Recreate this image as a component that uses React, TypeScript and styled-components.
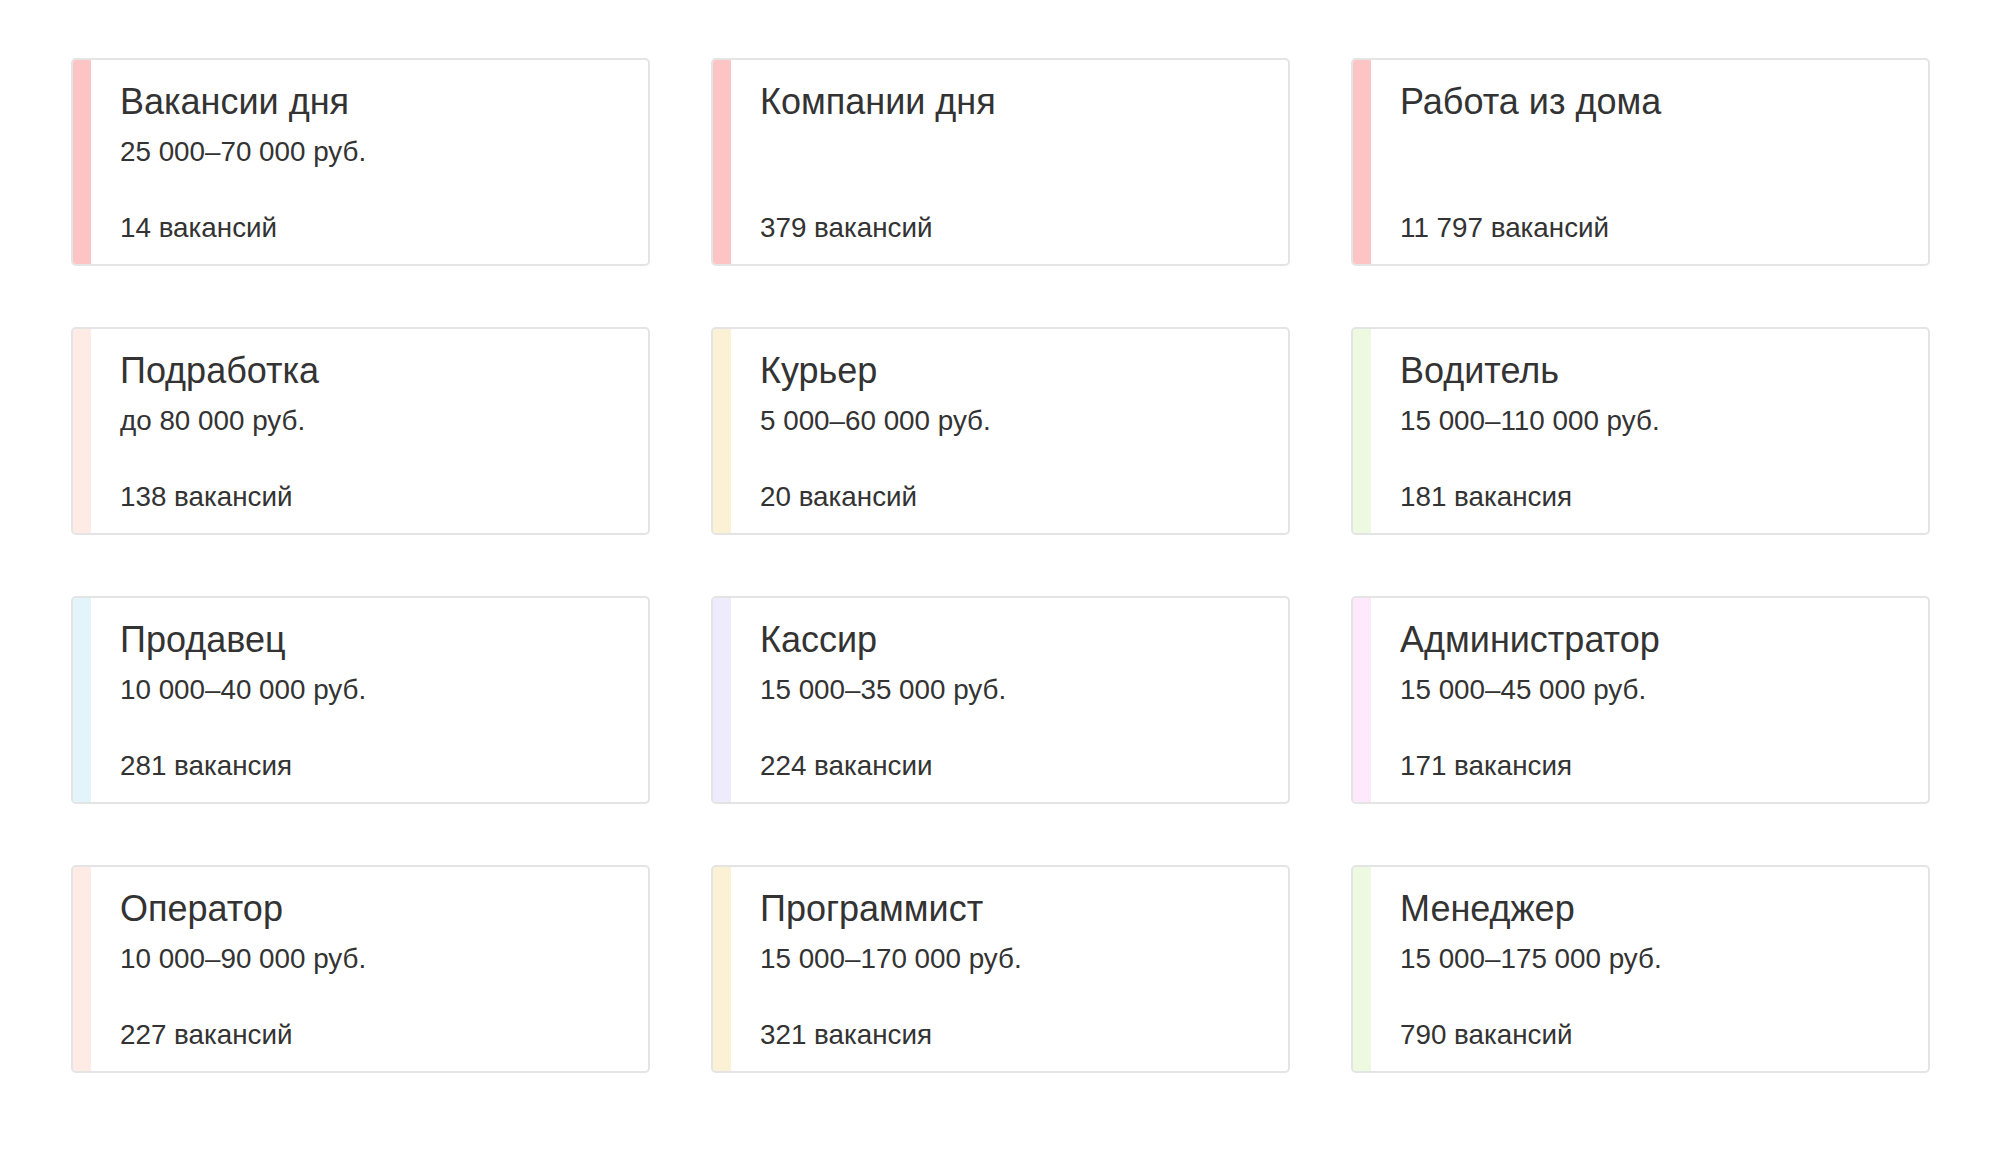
import React from 'react';
import styled, { createGlobalStyle } from 'styled-components';

interface ICategory {
  title: string;
  salary?: string;
  count: string;
  accent: string;
}

const categories: ICategory[] = [
  { title: 'Вакансии дня', salary: '25 000–70 000 руб.', count: '14 вакансий', accent: '#fcc4c4' },
  { title: 'Компании дня', count: '379 вакансий', accent: '#fcc4c4' },
  { title: 'Работа из дома', count: '11 797 вакансий', accent: '#fcc4c4' },
  { title: 'Подработка', salary: 'до 80 000 руб.', count: '138 вакансий', accent: '#ffebe5' },
  { title: 'Курьер', salary: '5 000–60 000 руб.', count: '20 вакансий', accent: '#fbf2d5' },
  { title: 'Водитель', salary: '15 000–110 000 руб.', count: '181 вакансия', accent: '#edf9e1' },
  { title: 'Продавец', salary: '10 000–40 000 руб.', count: '281 вакансия', accent: '#e3f5fb' },
  { title: 'Кассир', salary: '15 000–35 000 руб.', count: '224 вакансии', accent: '#eeebfc' },
  { title: 'Администратор', salary: '15 000–45 000 руб.', count: '171 вакансия', accent: '#fde9fb' },
  { title: 'Оператор', salary: '10 000–90 000 руб.', count: '227 вакансий', accent: '#ffebe5' },
  { title: 'Программист', salary: '15 000–170 000 руб.', count: '321 вакансия', accent: '#fbf2d5' },
  { title: 'Менеджер', salary: '15 000–175 000 руб.', count: '790 вакансий', accent: '#edf9e1' },
];

function CategoryCard({ title, salary, count, accent }: ICategory) {
  return (
    <Card>
      <Stripe color={accent} />
      <CardBody>
        <Title>{title}</Title>
        {salary && <Salary>{salary}</Salary>}
        <Count>{count}</Count>
      </CardBody>
    </Card>
  );
}

function App() {
  return (
    <>
      <GlobalStyle />
      <Page>
        <Grid>
          {categories.map((item) => (
            <CategoryCard key={item.title} {...item} />
          ))}
        </Grid>
      </Page>
    </>
  );
}

export default App;

const GlobalStyle = createGlobalStyle`
  html, body {
    margin: 0;
    background: #fff;
  }
  body {
    font-family: 'Liberation Sans', Arial, sans-serif;
    color: #333;
  }
`;

const Page = styled.main`
  padding: 58px 0 0 71px;
`;

const Grid = styled.div`
  display: grid;
  grid-template-columns: repeat(3, 579px);
  column-gap: 61px;
  row-gap: 61px;
`;

const Card = styled.a`
  display: flex;
  box-sizing: border-box;
  height: 208px;
  border: 2px solid #e4e4e4;
  border-radius: 5px;
  overflow: hidden;
  background: #fff;
  color: inherit;
  text-decoration: none;
`;

const Stripe = styled.div<{ color: string }>`
  flex: 0 0 18px;
  background: ${(props) => props.color};
`;

const CardBody = styled.div`
  display: flex;
  flex-direction: column;
  flex: 1;
  padding: 22px 24px 20px 29px;
`;

const Title = styled.h3`
  margin: 0;
  font-size: 36px;
  line-height: 40px;
  font-weight: normal;
  color: #333;
`;

const Salary = styled.div`
  margin-top: 14px;
  font-size: 27.8px;
  line-height: 32px;
  color: #333;
`;

const Count = styled.div`
  margin-top: auto;
  font-size: 27.8px;
  line-height: 32px;
  color: #333;
`;
